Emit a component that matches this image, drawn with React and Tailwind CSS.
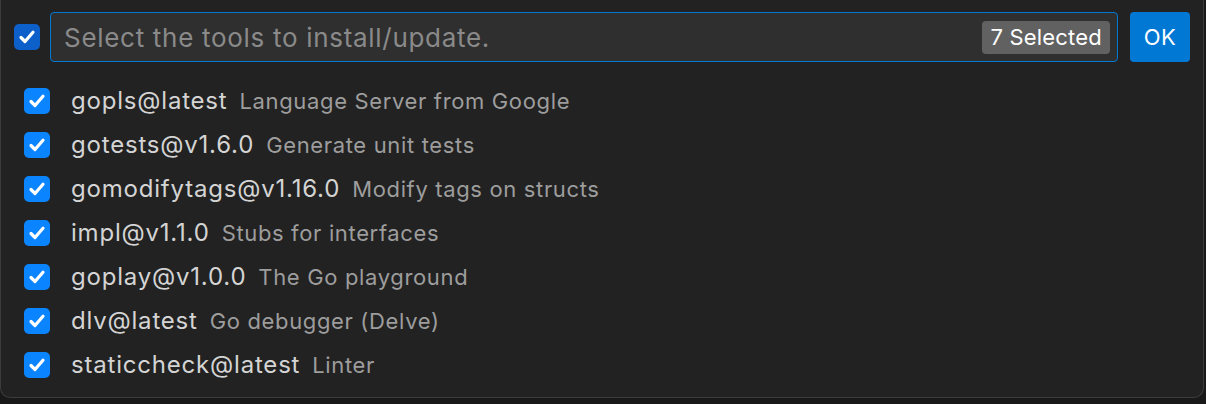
import React from "react";

const tools = [
  ["gopls@latest", "Language Server from Google"],
  ["gotests@v1.6.0", "Generate unit tests"],
  ["gomodifytags@v1.16.0", "Modify tags on structs"],
  ["impl@v1.1.0", "Stubs for interfaces"],
  ["goplay@v1.0.0", "The Go playground"],
  ["dlv@latest", "Go debugger (Delve)"],
  ["staticcheck@latest", "Linter"],
];

function Check({ className }) {
  return (
    <div className={"flex items-center justify-center rounded-[5px] " + className}>
      <svg width="20" height="20" viewBox="0 0 20 20" fill="none">
        <path d="M4 10.5 L8 14.5 L16 5.2" stroke="white" strokeWidth="3.2" strokeLinecap="round" strokeLinejoin="round" />
      </svg>
    </div>
  );
}

export default function App() {
  return (
    <div className="w-[1206px] h-[404px] bg-[#191919]" style={{ fontFamily: "Inter, 'Noto Sans', sans-serif" }}>
      <div className="w-[1204px] h-[398px] bg-[#222222] border-x border-b border-[#3c3c3c] rounded-b-[10px] flex flex-col">
        <div className="flex items-center pt-[12px] pl-[13px] pr-[13px]">
          <Check className="w-[26px] h-[26px] bg-[#0d5fc9]" />
          <div className="ml-[10px] flex-1 h-[50px] rounded-[4px] border border-[#0078d4] bg-[#2f2f2f] flex items-center pl-[13px] pr-[7px]">
            <span className="flex-1 text-[26px] text-[#8a8a8a] tracking-[0.7px]">Select the tools to install/update.</span>
            <span className="h-[33px] px-[8px] rounded-[4px] bg-[#616161] text-white text-[22px] tracking-[0.2px] flex items-center">7 Selected</span>
          </div>
          <button className="ml-[12px] w-[60px] h-[50px] rounded-[4px] bg-[#0078d4] text-white text-[22px] tracking-[0.5px] flex items-center justify-center">OK</button>
        </div>
        <div className="flex flex-col mt-[17px] pl-[23px]">
          {tools.map(([name, desc]) => (
            <div key={name} className="h-[44px] flex items-center">
              <Check className="w-[26px] h-[26px] bg-[#0a84ff]" />
              <span className="ml-[21px] text-[24px] tracking-[0.8px] text-[#d4d4d4]">{name}</span>
              <span className="ml-[12px] text-[22px] tracking-[0.65px] text-[#9d9d9d]">{desc}</span>
            </div>
          ))}
        </div>
      </div>
    </div>
  );
}
